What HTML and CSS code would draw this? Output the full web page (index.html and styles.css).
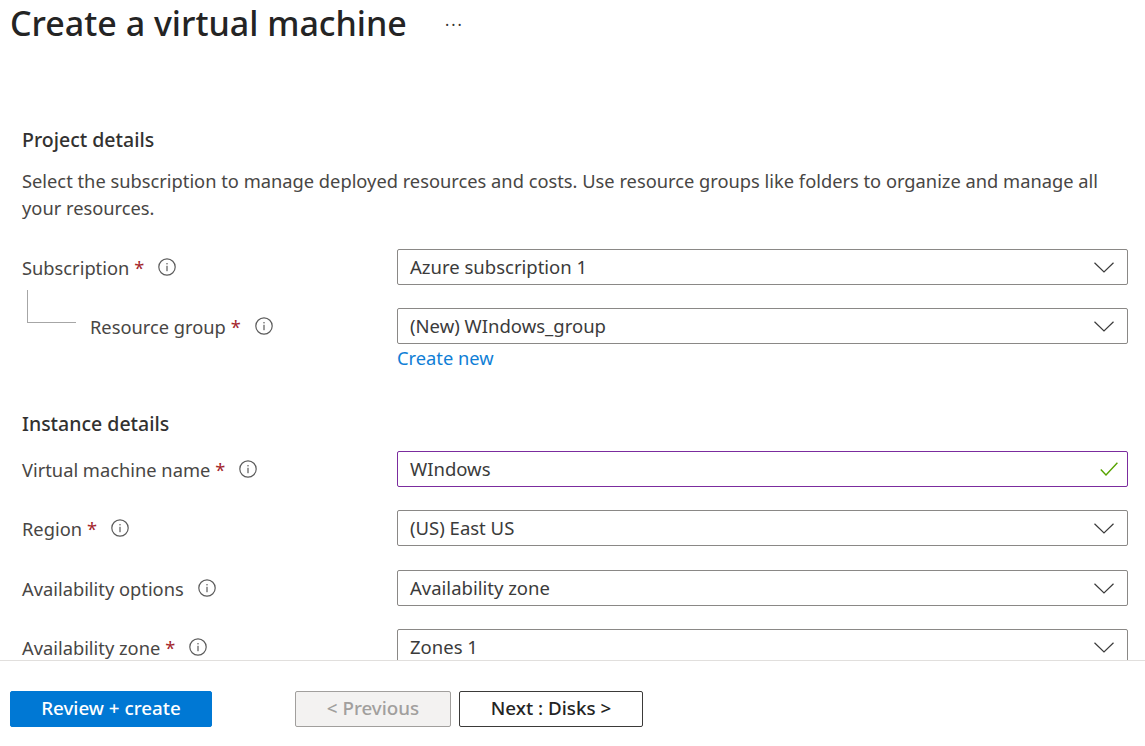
FILE: index.html
```html
<!DOCTYPE html>
<html lang="en">
<head>
    <meta charset="UTF-8">
    <title>Create a virtual machine</title>
    <link rel="stylesheet" href="styles.css">
</head>
<body>
    <svg class="defs" width="0" height="0">
        <symbol id="info" viewBox="0 0 18 18">
            <circle cx="9" cy="9" r="8.2" fill="none" stroke="#5c5c5c" stroke-width="1.2"/>
            <rect x="8.4" y="7.8" width="1.2" height="5.4" fill="#5c5c5c"/>
            <rect x="8.4" y="5" width="1.2" height="1.4" fill="#5c5c5c"/>
        </symbol>
        <symbol id="chevron" viewBox="0 0 20 11">
            <path d="M0.5 0.8 L10 10 L19.5 0.8" fill="none" stroke="#3b3b3b" stroke-width="1.2"/>
        </symbol>
    </svg>
    <div id="page">
        <main id="content">
            <header class="title-bar">
                <h1>Create a virtual machine</h1>
                <span class="more">···</span>
            </header>

            <section class="project">
                <h2>Project details</h2>
                <p class="intro">Select the subscription to manage deployed resources and costs. Use resource groups like folders to organize and manage all your resources.</p>

                <div class="row">
                    <div class="label">Subscription<span class="req">*</span><svg class="info"><use href="#info"/></svg></div>
                    <div class="select"><span>Azure subscription 1</span><svg class="chevron"><use href="#chevron"/></svg></div>
                </div>
                <div class="row nested">
                    <div class="label"><span class="tree"></span>Resource group<span class="req">*</span><svg class="info"><use href="#info"/></svg></div>
                    <div class="select"><span>(New) WIndows_group</span><svg class="chevron"><use href="#chevron"/></svg></div>
                </div>
                <a class="create-new" href="#">Create new</a>
            </section>

            <section class="instance">
                <h2>Instance details</h2>
                <div class="row name-row">
                    <div class="label">Virtual machine name<span class="req">*</span><svg class="info"><use href="#info"/></svg></div>
                    <div class="select valid"><span>WIndows</span>
                        <svg class="check" viewBox="0 0 18 14"><path d="M0.8 7.5 L6 13 L17.4 0.8" fill="none" stroke="#57a300" stroke-width="1.4"/></svg>
                    </div>
                </div>
                <div class="row region-row">
                    <div class="label">Region<span class="req">*</span><svg class="info"><use href="#info"/></svg></div>
                    <div class="select"><span>(US) East US</span><svg class="chevron"><use href="#chevron"/></svg></div>
                </div>
                <div class="row">
                    <div class="label">Availability options<svg class="info"><use href="#info"/></svg></div>
                    <div class="select"><span>Availability zone</span><svg class="chevron"><use href="#chevron"/></svg></div>
                </div>
                <div class="row">
                    <div class="label">Availability zone<span class="req">*</span><svg class="info"><use href="#info"/></svg></div>
                    <div class="select"><span>Zones 1</span><svg class="chevron"><use href="#chevron"/></svg></div>
                </div>
            </section>
        </main>
        <footer id="actions">
            <button class="btn primary">Review + create</button>
            <button class="btn disabled">&lt; Previous</button>
            <button class="btn next">Next : Disks &gt;</button>
        </footer>
    </div>
</body>
</html>
```
FILE: styles.css
```css
html, body {
    margin: 0;
    padding: 0;
    height: 100%;
    overflow: hidden;
    background: #fff;
}
body {
    font-family: "Noto Sans", "Open Sans", sans-serif;
    font-size: 18.3px;
    color: #3b3b3b;
}
.defs {
    display: block;
}
#page {
    height: 746px;
    display: flex;
    flex-direction: column;
}
#content {
    height: 660px;
    overflow: hidden;
    padding: 0 17px 0 22px;
    flex: none;
}
.title-bar {
    display: flex;
    align-items: center;
    height: 46px;
    margin-left: -12px;
}
h1 {
    margin: 0;
    font-size: 34px;
    font-weight: 500;
    color: #242424;
    line-height: 46px;
    width: 435px;
}
.more {
    font-size: 16px;
    color: #333;
    letter-spacing: 2px;
    padding-top: 4px;
}
h2 {
    margin: 0;
    font-size: 19.5px;
    font-weight: 500;
    color: #323130;
    line-height: 26px;
}
.project {
    padding-top: 81px;
}
.intro {
    margin: 14px 0 0;
    line-height: 27px;
    height: 54px;
    color: #484644;
}
.row {
    display: flex;
    align-items: center;
    height: 36px;
    margin-bottom: 23px;
}
.project .row:first-of-type {
    margin-top: 28px;
}
.project .nested {
    margin-bottom: 0;
}
.region-row {
    margin-bottom: 24px;
}
.label {
    width: 375px;
    flex: none;
    display: flex;
    align-items: center;
    position: relative;
    color: #484644;
}
.nested .label {
    padding-left: 68px;
    box-sizing: border-box;
}
.tree {
    position: absolute;
    left: 5px;
    top: -24px;
    width: 48px;
    height: 32px;
    border-left: 1px solid #a6a6a6;
    border-bottom: 1px solid #a6a6a6;
}
.req {
    color: #a4262c;
    margin-left: 5px;
}
.info {
    width: 18px;
    height: 18px;
    margin-left: 14px;
}
.select {
    flex: 1;
    box-sizing: border-box;
    height: 36px;
    border: 1px solid #8a8886;
    border-radius: 2px;
    display: flex;
    align-items: center;
    justify-content: space-between;
    padding: 0 13px 0 12px;
    color: #3b3b3b;
    font-size: 18.5px;
}
.select span {
    margin-top: -2px;
}
.select.valid {
    border-color: #7b2c9e;
    padding-right: 9px;
}
.chevron {
    width: 20px;
    height: 11px;
}
.check {
    width: 18px;
    height: 14px;
}
.create-new {
    display: block;
    margin: 0 0 0 375px;
    line-height: 27px;
    color: #0f7ed6;
    text-decoration: none;
}
.instance {
    padding-top: 40px;
}
.name-row {
    margin-top: 14px;
}
#actions {
    flex: 1;
    border-top: 1px solid #e1dfdd;
    display: flex;
    align-items: flex-start;
    padding: 30px 0 0 10px;
}
.btn {
    font-family: inherit;
    font-size: 18.8px;
    font-weight: 500;
    height: 36px;
    border-radius: 2px;
    border: 1px solid #3b3a39;
    background: #fff;
    color: #242424;
    padding: 0 0 2px;
}
.primary {
    width: 202px;
    background: #0078d4;
    border-color: #0078d4;
    color: #fff;
    margin-right: 83px;
}
.disabled {
    width: 156px;
    background: #f3f2f1;
    border-color: #a19f9d;
    color: #a19f9d;
    margin-right: 8px;
}
.next {
    width: 184px;
}
```
